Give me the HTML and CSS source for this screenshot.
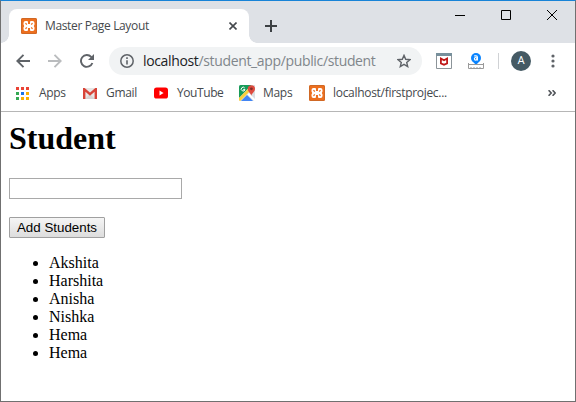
FILE: index.html
```html
<!DOCTYPE html>
<html lang="en">
<head>
<meta charset="utf-8">
<title>Master Page Layout</title>
<link rel="stylesheet" href="styles.css">
</head>
<body>
<svg class="defs" aria-hidden="true">
  <symbol id="xampp" viewBox="0 0 16 16">
    <rect width="16" height="16" rx="1.5" fill="#ed6f1f"/>
    <rect x=".5" y=".5" width="15" height="15" rx="1.2" fill="none" stroke="#cf6825"/>
    <path d="M4.500 3H6Q7 3 7 4v2h2V4q0-1 1-1h1.500Q13.500 3 13.500 5v1.500L12.800 8l.7 1.500V11q0 2-2 2H10q-1 0-1-1v-2H7v2q0 1-1 1H4.500q-2 0-2-2V9.500L3.200 8l-.7-1.500V5q0-2 2-2" fill="#fff"/>
    <path d="M4.400 5.300l1.500 1.200M11.600 5.300l-1.500 1.200M4.400 10.700l1.500-1.200M11.600 10.700l-1.500-1.200" stroke="#ed6f1f" stroke-width="1.200"/>
  </symbol>
</svg>
<div class="window">
  <header class="tabstrip">
    <div class="tab">
      <svg class="i16"><use href="#xampp"/></svg>
      <span class="tab-title">Master Page Layout</span>
      <svg class="tab-close" viewBox="0 0 8 8"><path d="M.5.5l7 7M7.5.5l-7 7" stroke="#45494d" stroke-width="1.6"/></svg>
    </div>
    <svg class="newtab" viewBox="0 0 12 12"><path d="M6 0v12M0 6h12" stroke="#3c4043" stroke-width="2"/></svg>
    <div class="controls">
      <svg viewBox="0 0 10 10"><path d="M0 5.5h10" stroke="#000"/></svg>
      <svg viewBox="0 0 10 10"><path d="M.5.5h9v9h-9z" fill="none" stroke="#000"/></svg>
      <svg viewBox="0 0 10 10"><path d="M0 0l10 10M10 0L0 10" stroke="#000"/></svg>
    </div>
  </header>
  <div class="toolbar">
    <svg class="back" viewBox="0 0 14 14"><path d="M14 7H1.5M7.5.8L1.3 7l6.2 6.2" fill="none" stroke="#5f6368" stroke-width="1.9"/></svg>
    <svg class="forward" viewBox="0 0 14 14"><path d="M0 7h12.5M6.5.8L12.7 7l-6.2 6.2" fill="none" stroke="#babcbe" stroke-width="1.9"/></svg>
    <svg class="reload" viewBox="0 0 14 14"><path d="M12.4 9A5.9 5.9 0 1 1 11.2 2.9l1 1" fill="none" stroke="#5f6368" stroke-width="1.9"/><path d="M14 0v6H8z" fill="#5f6368"/></svg>
    <div class="omnibox">
      <svg class="info" viewBox="0 0 14 14"><circle cx="7" cy="7" r="6.2" fill="none" stroke="#5f6368" stroke-width="1.5"/><path d="M7 6.2v4.3M7 3.3v1.6" stroke="#5f6368" stroke-width="1.6"/></svg>
      <span class="url"><span class="host">localhost</span><span class="path">/student_app/public/student</span></span>
      <svg class="star" viewBox="0 0 14 14"><path d="M7 1.4l1.7 3.9 4.2.4-3.2 2.8 1 4.1L7 10.4l-3.7 2.2 1-4.1L1.1 5.7l4.2-.4z" fill="none" stroke="#5f6368" stroke-width="1.4"/></svg>
    </div>
    <svg class="mcafee" viewBox="0 0 16 16"><path d="M.5 1v14.500h15V1" fill="#fff" stroke="#8c9499"/><path d="M0 0h16v3H0z" fill="#78909c"/><path d="M4.900 5.500v5L8 11.700l3.100-1.200v-5L8 7.200z" fill="none" stroke="#c01818" stroke-width="1.800"/></svg>
    <svg class="alexa" viewBox="0 0 16 16"><path d="M8 12L5 8.8h6z" fill="#0a84ff"/><circle cx="8" cy="5" r="5" fill="#0a84ff"/><circle cx="7.700" cy="5.800" r="1.300" fill="none" stroke="#fff" stroke-width="1.200"/><path d="M6.200 2.900h1.900q1.300 0 1.300 1.300v3.300" fill="none" stroke="#fff" stroke-width="1.200"/><path d="M.5 10v5.500h15V10M.5 11.500h15M3 14v1M6 14v1M9 14v1M12 14v1" fill="none" stroke="#9a9a9a"/></svg>
    <i class="divider"></i>
    <span class="avatar">A</span>
    <svg class="menu" viewBox="0 0 4 14"><g fill="#5f6368"><circle cx="2" cy="2" r="1.6"/><circle cx="2" cy="7" r="1.6"/><circle cx="2" cy="12" r="1.6"/></g></svg>
  </div>
  <nav class="bookmarks">
    <a class="bm apps"><svg viewBox="0 0 13 13"><path d="M0 0h3v3H0zM5 0h3v3H5zM10 0h3v3h-3z" fill="#ea4335"/><path d="M0 5h3v3H0zM0 10h3v3H0z" fill="#34a853"/><path d="M5 5h3v3H5z" fill="#1a73e8"/><path d="M10 5h3v3h-3zM5 10h3v3H5zM10 10h3v3h-3z" fill="#fbaf00"/></svg><span>Apps</span></a>
    <a class="bm gmail"><svg viewBox="0 0 14 11"><path d="M0 0h14v11H0z" fill="#e8e6e5"/><path d="M2 11l5-5 5 5z" fill="#d8d5d4"/><path d="M1.2 11V1.2L7 6.2l5.800-5V11" fill="none" stroke="#d84438" stroke-width="2.400"/></svg><span>Gmail</span></a>
    <a class="bm youtube"><svg viewBox="0 0 14 12"><rect y=".5" width="14" height="11" rx="2.600" fill="#f00"/><path d="M5.500 3.600v4.800L9.600 6z" fill="#fff"/></svg><span>YouTube</span></a>
    <a class="bm maps"><svg viewBox="0 0 16 16"><path d="M1.500 0H16v16H1.500Q0 16 0 14.500v-13Q0 0 1.500 0" fill="#dce0e3"/><path d="M1.500 0h11L0 13V1.500Q0 0 1.500 0" fill="#189b59"/><path d="M2 16l6-6 6 6z" fill="#4285f4"/><path d="M0 13L10 3l2 2L1.200 16Q0 16 0 14.500z" fill="#fbd03b"/><path d="M8.500 9.500L10 8l6 6v2h-1z" fill="#fff"/><path d="M5.700 3A1.900 1.900 0 1 0 6 4.600H4.200" fill="none" stroke="#fff"/><path d="M12.300 11c0-2.500-3.500-3.800-3.500-7.200a3.600 3.600 0 0 1 7.200 0c0 3.400-3.700 4.700-3.700 7.200" fill="#df4b3f"/><circle cx="12.400" cy="3.800" r="1.400" fill="#802c27"/></svg><span>Maps</span></a>
    <a class="bm local"><svg><use href="#xampp"/></svg><span>localhost/firstprojec...</span></a>
    <svg class="more" viewBox="0 0 8 6"><path d="M.6.200L3.200 3 .6 5.800M4.600.2L7.200 3 4.600 5.800" fill="none" stroke="#505459" stroke-width="1.600"/></svg>
  </nav>
  <main class="page">
    <h1>Student</h1>
    <input class="name" type="text" aria-label="Student">
    <button class="add" type="button">Add Students</button>
    <ul>
      <li>Akshita</li>
      <li>Harshita</li>
      <li>Anisha</li>
      <li>Nishka</li>
      <li>Hema</li>
      <li>Hema</li>
    </ul>
  </main>
</div>
</body>
</html>
```
FILE: styles.css
```css
* { box-sizing: border-box; }
body { margin: 0; overflow: hidden; }
svg { display: block; flex: none; }
.defs { position: absolute; width: 0; height: 0; }
.window {
  width: 576px; height: 402px;
  border: 1px solid #707070; border-top-color: #1883d7;
  background: #fff;
  font-family: "Open Sans", "Noto Sans", sans-serif;
}
.tabstrip { display: flex; height: 42px; padding: 8px 18px 0 8px; background: #dee1e6; }
.tab {
  position: relative; display: flex; align-items: center;
  width: 240px; height: 34px; padding: 0 12px;
  background: #fff; border-radius: 8px 8px 0 0;
}
.tab::before, .tab::after { content: ""; position: absolute; bottom: 0; width: 8px; height: 8px; }
.tab::before { left: -8px; background: radial-gradient(circle at 0 0, transparent 7.5px, #fff 8px); }
.tab::after { right: -8px; background: radial-gradient(circle at 100% 0, transparent 7.5px, #fff 8px); }
.i16 { width: 16px; height: 16px; }
.tab-title { margin-left: 8px; font-size: 12px; line-height: 16px; letter-spacing: -.36px; color: #45494d; white-space: nowrap; }
.tab-close { width: 8px; height: 8px; margin-left: auto; }
.newtab { width: 12px; height: 12px; margin: 11px 0 0 16px; }
.controls { display: flex; gap: 36px; margin-left: auto; margin-top: 1px; }
.controls svg { width: 10px; height: 10px; }
.toolbar { display: flex; align-items: center; height: 36px; padding-left: 15px; }
.back, .forward, .reload { width: 14px; height: 14px; }
.forward { margin-left: 18px; }
.reload { margin-left: 18px; }
.omnibox { display: flex; align-items: center; width: 313px; height: 28px; margin-left: 15px; padding: 0 11px; border-radius: 14px; background: #f1f3f4; }
.info, .star { width: 14px; height: 14px; }
.star { margin-left: auto; }
.url { margin-left: 9px; font-size: 14px; line-height: 20px; letter-spacing: -.35px; white-space: nowrap; }
.host { color: #202124; }
.path { color: #80868b; }
.mcafee { width: 16px; height: 16px; margin-left: 14px; }
.alexa { width: 16px; height: 16px; margin-left: 16px; }
.divider { width: 1px; height: 16px; margin-left: 14px; background: #d0d2d5; }
.avatar { width: 20px; height: 20px; margin-left: 12px; border-radius: 50%; background: #455a64; color: #fff; font: 11px/20px Roboto, sans-serif; text-align: center; }
.menu { width: 4px; height: 14px; margin-left: 20px; }
.bookmarks { display: flex; align-items: center; height: 33px; padding: 0 19px 4px 15px; border-bottom: 1px solid #b6b6b6; }
.bm { display: flex; align-items: center; font-size: 12px; line-height: 16px; letter-spacing: -.3px; color: #45494d; white-space: nowrap; }
.apps { width: 67px; gap: 10px; }
.apps svg { width: 13px; height: 13px; }
.gmail { width: 71px; gap: 9px; }
.gmail svg { width: 14px; height: 11px; }
.youtube { width: 85px; gap: 9px; letter-spacing: -.42px; }
.youtube svg { width: 14px; height: 12px; }
.maps { width: 70px; gap: 8px; }
.maps svg, .local svg { width: 16px; height: 16px; }
.local { gap: 8px; }
.more { width: 8px; height: 6px; margin-left: auto; }
.page { padding: 8px; font: 16px/18px "Liberation Serif", serif; color: #000; }
h1 { margin: 0 0 21px; font-size: 32px; line-height: 37px; }
.name { display: block; width: 173px; height: 21px; margin: 0 0 18px; border: 1px solid #a9a9a9; background: #fff; }
.add { display: block; width: 96px; height: 21px; padding: 0; border: 1px solid #a0a0a0; border-radius: 1px; background: linear-gradient(#f5f5f5, #dddddd); font: 13.333px/17px "Liberation Sans", sans-serif; color: #000; }
ul { margin: 16px 0 0; padding-left: 40px; }
```
